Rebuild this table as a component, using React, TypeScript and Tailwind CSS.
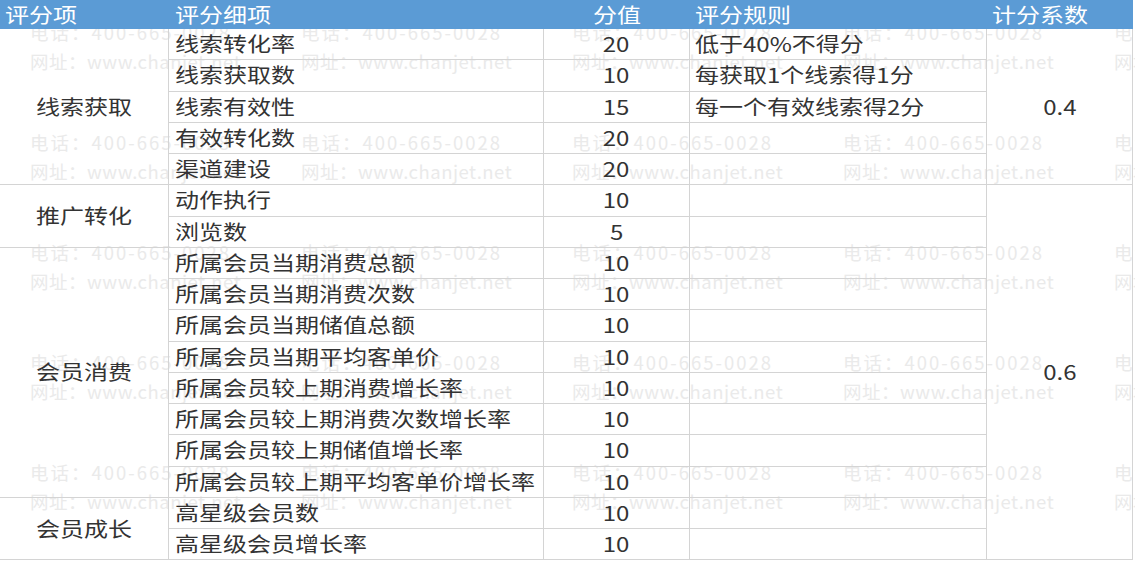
import React from "react";

const rows: [string, string, string][] = [
  ["线索转化率", "20", "低于40%不得分"],
  ["线索获取数", "10", "每获取1个线索得1分"],
  ["线索有效性", "15", "每一个有效线索得2分"],
  ["有效转化数", "20", ""],
  ["渠道建设", "20", ""],
  ["动作执行", "10", ""],
  ["浏览数", "5", ""],
  ["所属会员当期消费总额", "10", ""],
  ["所属会员当期消费次数", "10", ""],
  ["所属会员当期储值总额", "10", ""],
  ["所属会员当期平均客单价", "10", ""],
  ["所属会员较上期消费增长率", "10", ""],
  ["所属会员较上期消费次数增长率", "10", ""],
  ["所属会员较上期储值增长率", "10", ""],
  ["所属会员较上期平均客单价增长率", "10", ""],
  ["高星级会员数", "10", ""],
  ["高星级会员增长率", "10", ""],
];

const groups: Record<number, { label: string; span: string }> = {
  0: { label: "线索获取", span: "row-span-5" },
  5: { label: "推广转化", span: "row-span-2" },
  7: { label: "会员消费", span: "row-span-8" },
  15: { label: "会员成长", span: "row-span-2" },
};

const coefs: Record<number, { label: string; span: string }> = {
  0: { label: "0.4", span: "row-span-5" },
  5: { label: "0.6", span: "row-span-12" },
};

const cell = "flex items-center border-b border-r border-[#d4d4d4] text-[#333] whitespace-nowrap";

function L({ children }: { children: React.ReactNode }) {
  return <span className="inline-block origin-left scale-x-[1.2]">{children}</span>;
}
function C({ children }: { children: React.ReactNode }) {
  return <span className="inline-block origin-center scale-x-[1.2]">{children}</span>;
}

function Watermark() {
  const cols = [0, 1, 2, 3, 4];
  const blocks = [0, 1, 2, 3, 4];
  return (
    <div className="pointer-events-none absolute left-[30px] top-[18px] z-0 flex flex-col text-[18.5px] leading-[29px] text-[#eaeaea]">
      {blocks.map((b) => (
        <div key={b} className="flex h-[110px]">
          {cols.map((c) => (
            <div key={c} className="flex w-[271px] shrink-0 flex-col whitespace-nowrap">
              <span className="tracking-[2px]">电话：400-665-0028</span>
              <span className="tracking-[0.5px]">网址：www.chanjet.net</span>
            </div>
          ))}
        </div>
      ))}
    </div>
  );
}

export default function App() {
  return (
    <div
      className="relative h-[561px] w-[1135px] overflow-hidden bg-white"
      style={{ fontFamily: '"Noto Sans CJK SC", "Noto Sans", sans-serif' }}
    >
      <Watermark />
      <div className="relative z-10 grid grid-cols-[169px_375px_146px_297px_146px] grid-rows-[29px_repeat(17,31.25px)] text-[20px] leading-none">
        <div className="flex items-center bg-[#5b9bd5] pl-[5px] text-white"><L>评分项</L></div>
        <div className="flex items-center bg-[#5b9bd5] pl-[6px] text-white"><L>评分细项</L></div>
        <div className="flex items-center justify-center bg-[#5b9bd5] text-white"><C>分值</C></div>
        <div className="flex items-center bg-[#5b9bd5] pl-[5px] text-white"><L>评分规则</L></div>
        <div className="flex items-center bg-[#5b9bd5] pl-[5px] text-white"><L>计分系数</L></div>
        {rows.map(([name, score, rule], i) => (
          <React.Fragment key={i}>
            {groups[i] && (
              <div className={`${cell} ${groups[i].span} justify-center`}>
                <C>{groups[i].label}</C>
              </div>
            )}
            <div className={`${cell} pl-[6px]`}><L>{name}</L></div>
            <div className={`${cell} justify-center`}><C>{score}</C></div>
            <div className={`${cell} pl-[5px]`}>{rule && <L>{rule}</L>}</div>
            {coefs[i] && (
              <div className={`${cell} ${coefs[i].span} justify-center`}>
                <C>{coefs[i].label}</C>
              </div>
            )}
          </React.Fragment>
        ))}
      </div>
    </div>
  );
}
